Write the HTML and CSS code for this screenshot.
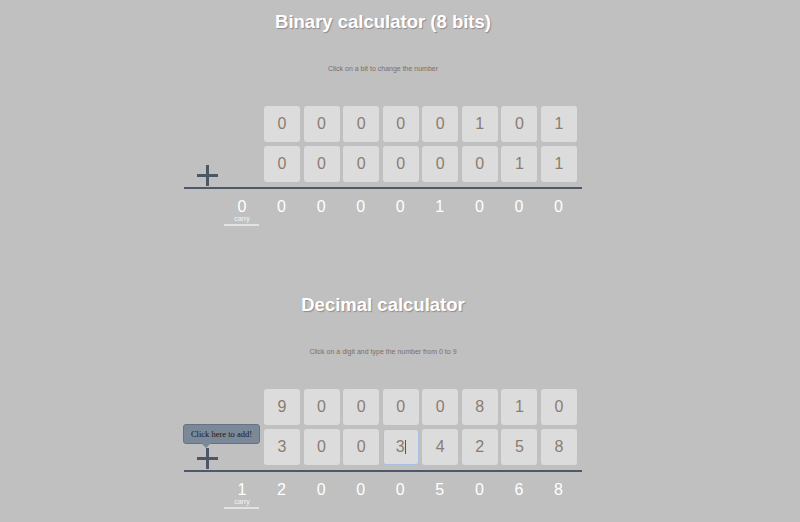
FILE: index.html
```html
<!DOCTYPE html>
<html>
<head>
<meta charset="utf-8">
<title>Calculators</title>
<link rel="stylesheet" href="styles.css">
</head>
<body>
<div class="page">
  <section class="calc-section">
    <h1 class="title">Binary calculator (8 bits)</h1>
    <p class="hint">Click on a bit to change the number</p>
    <div class="calc">
      <div class="row">
        <div class="spacer"></div>
        <div class="tile">0</div><div class="tile">0</div><div class="tile">0</div><div class="tile">0</div>
        <div class="tile">0</div><div class="tile">1</div><div class="tile">0</div><div class="tile">1</div>
      </div>
      <div class="row">
        <div class="spacer">
          <svg class="plus" width="21" height="21" viewBox="0 0 21 21"><path d="M0 10.5H21M10.5 0V21" stroke="#4b5667" stroke-width="3"/></svg>
        </div>
        <div class="tile">0</div><div class="tile">0</div><div class="tile">0</div><div class="tile">0</div>
        <div class="tile">0</div><div class="tile">0</div><div class="tile">1</div><div class="tile">1</div>
      </div>
      <div class="rule"></div>
      <div class="result">
        <div class="res-spacer"></div>
        <div class="carry"><span class="digit">0</span><span class="carry-label">carry</span><span class="carry-line"></span></div>
        <div class="digit">0</div><div class="digit">0</div><div class="digit">0</div><div class="digit">0</div>
        <div class="digit">1</div><div class="digit">0</div><div class="digit">0</div><div class="digit">0</div>
      </div>
    </div>
  </section>

  <section class="calc-section last">
    <h1 class="title">Decimal calculator</h1>
    <p class="hint">Click on a digit and type the number from 0 to 9</p>
    <div class="calc">
      <div class="row">
        <div class="spacer"></div>
        <div class="tile">9</div><div class="tile">0</div><div class="tile">0</div><div class="tile">0</div>
        <div class="tile">0</div><div class="tile">8</div><div class="tile">1</div><div class="tile">0</div>
      </div>
      <div class="row">
        <div class="spacer">
          <svg class="plus" width="21" height="21" viewBox="0 0 21 21"><path d="M0 10.5H21M10.5 0V21" stroke="#4b5667" stroke-width="3"/></svg>
          <div class="tooltip">Click here to add!</div>
        </div>
        <div class="tile">3</div><div class="tile">0</div><div class="tile">0</div><div class="tile focused">3<span class="caret"></span></div>
        <div class="tile">4</div><div class="tile">2</div><div class="tile">5</div><div class="tile">8</div>
      </div>
      <div class="rule"></div>
      <div class="result">
        <div class="res-spacer"></div>
        <div class="carry"><span class="digit">1</span><span class="carry-label">carry</span><span class="carry-line"></span></div>
        <div class="digit">2</div><div class="digit">0</div><div class="digit">0</div><div class="digit">0</div>
        <div class="digit">5</div><div class="digit">0</div><div class="digit">6</div><div class="digit">8</div>
      </div>
    </div>
  </section>
</div>
</body>
</html>
```
FILE: styles.css
```css
html, body {
  margin: 0;
  padding: 0;
  background: #c0c0c0;
}
body {
  width: 800px;
  height: 522px;
  overflow: hidden;
  font-family: "Liberation Sans", Arial, sans-serif;
}
.page {
  width: 766px;
}
.calc-section {
  box-sizing: border-box;
  height: 283px;
  padding-top: 11px;
  text-align: center;
}
.calc-section.last {
  height: auto;
}
.title {
  margin: 0;
  font-size: 18.5px;
  line-height: 22px;
  font-weight: bold;
  color: #ffffff;
  text-shadow: 1px 1px 1px rgba(90, 70, 80, 0.45);
}
.hint {
  margin: 31px 0 0;
  font-size: 7px;
  line-height: 10px;
  color: #7a6f69;
}
.calc {
  width: 398px;
  margin: 32px auto 0;
}
.row {
  display: flex;
  gap: 3.57px;
  height: 36px;
  margin-bottom: 4px;
}
.row:nth-child(2) {
  margin-bottom: 0;
}
.spacer {
  position: relative;
  width: 76.43px;
  flex: none;
}
.plus {
  display: block;
  margin: 19px 0 0 13px;
}
.tile {
  width: 36px;
  height: 36px;
  flex: none;
  box-sizing: border-box;
  background: #dcdcdc;
  border-radius: 3px;
  color: #8b7d71;
  font-size: 16px;
  line-height: 36px;
  text-align: center;
}
.tile.focused {
  border: 1px solid #a9c0df;
  line-height: 34px;
}
.caret {
  display: inline-block;
  width: 1px;
  height: 14px;
  background: #555;
  vertical-align: -2px;
}
.rule {
  height: 2px;
  margin-top: 5px;
  background: #4f5868;
}
.result {
  display: flex;
  gap: 3.57px;
  margin-top: 9px;
}
.res-spacer {
  width: 36.43px;
  flex: none;
}
.digit {
  display: block;
  width: 36px;
  flex: none;
  font-size: 16px;
  line-height: 18px;
  color: #ffffff;
  text-align: center;
}
.carry {
  width: 36px;
  flex: none;
  display: flex;
  flex-direction: column;
  align-items: center;
}
.carry-label {
  font-size: 7px;
  line-height: 5px;
  color: #f4f4f4;
}
.carry-line {
  display: block;
  width: 35px;
  height: 2px;
  margin-top: 3px;
  background: #e2e2e2;
}
.tooltip {
  position: absolute;
  left: -1px;
  top: -5px;
  width: 77px;
  height: 20px;
  box-sizing: border-box;
  background: #7a8898;
  border: 1px solid #667384;
  border-radius: 3px;
  font-family: "Liberation Serif", "Times New Roman", serif;
  font-size: 8.5px;
  line-height: 18px;
  color: #1a1a1a;
  text-align: center;
}
.tooltip::after {
  content: "";
  position: absolute;
  left: 17px;
  top: 18px;
  border-left: 5px solid transparent;
  border-right: 5px solid transparent;
  border-top: 5px solid #7a8898;
}
```
